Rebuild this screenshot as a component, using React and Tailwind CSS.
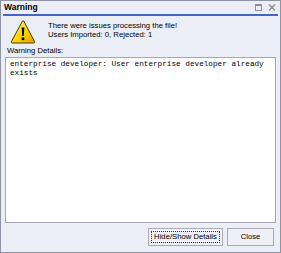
export default function App() {
  return (
    <div className="w-[281px] h-[253px] border border-[#8f93a3] bg-[#eceef6] flex flex-col font-['Liberation_Sans',Arial,sans-serif] text-black select-none">
      <div className="h-[13px] flex items-center justify-between pl-[3px] pr-[4px]">
        <span className="text-[8.5px] font-bold leading-none">Warning</span>
        <div className="flex items-center gap-[5px]">
          <svg width="8" height="7" viewBox="0 0 8 7" className="block">
            <rect x="0.5" y="0.5" width="6" height="6" fill="none" stroke="#8c8c96" />
            <line x1="0.5" y1="1.5" x2="6.5" y2="1.5" stroke="#8c8c96" />
          </svg>
          <svg width="8" height="7" viewBox="0 0 8 7" className="block">
            <path d="M1 0.5 L7 6.5 M7 0.5 L1 6.5" stroke="#8c8c96" strokeWidth="1.4" />
          </svg>
        </div>
      </div>
      <div className="h-[2px] mx-[2px] bg-[#4466cc]" />
      <div className="flex pl-[9px] pt-[4px] h-[28px]">
        <svg width="26" height="24" viewBox="0 0 26 24" className="block shrink-0">
          <defs>
            <linearGradient id="wg" x1="0" y1="0" x2="1" y2="1">
              <stop offset="0" stopColor="#fff59a" />
              <stop offset="0.5" stopColor="#ffd800" />
              <stop offset="1" stopColor="#e0a000" />
            </linearGradient>
          </defs>
          <path d="M12.5 1 Q13 0.5 13.8 1.2 L24.6 21.6 Q25 23 23.6 23 L2.2 23 Q1 23 1.4 21.6 Z" fill="url(#wg)" stroke="#4a3a00" strokeWidth="1" />
          <path d="M11.6 7.5 L14.4 7.5 L13.7 16 L12.3 16 Z" fill="#000" />
          <rect x="11.7" y="17.5" width="2.6" height="2.6" fill="#000" />
        </svg>
        <div className="ml-[12px] pt-[1px] text-[7.7px] leading-[9px]">
          <div>There were issues processing the file!</div>
          <div>Users Imported: 0, Rejected: 1</div>
        </div>
      </div>
      <div className="pl-[6px] pt-[2px] text-[7.7px] leading-[9px]">Warning Details:</div>
      <div className="mx-[4px] mt-[2px] h-[166px] bg-white border border-[#a4a8b4] px-[4px] pt-[2px] font-['Liberation_Mono','Courier_New',monospace] text-[7.7px] leading-[9px]">
        <div>enterprise developer: User enterprise developer already</div>
        <div>exists</div>
      </div>
      <div className="flex justify-end gap-[4px] pr-[6px] pt-[5px]">
        <button className="w-[75px] h-[18px] border border-[#a8abb6] bg-[#eef0f6] flex items-center justify-center p-[2px]">
          <span className="w-full h-full border border-dotted border-[#333] flex items-center justify-center text-[7.7px] leading-none">Hide/Show Details</span>
        </button>
        <button className="w-[47px] h-[18px] border border-[#a8abb6] bg-[#eef0f6] flex items-center justify-center text-[7.7px] leading-none">Close</button>
      </div>
    </div>
  );
}
